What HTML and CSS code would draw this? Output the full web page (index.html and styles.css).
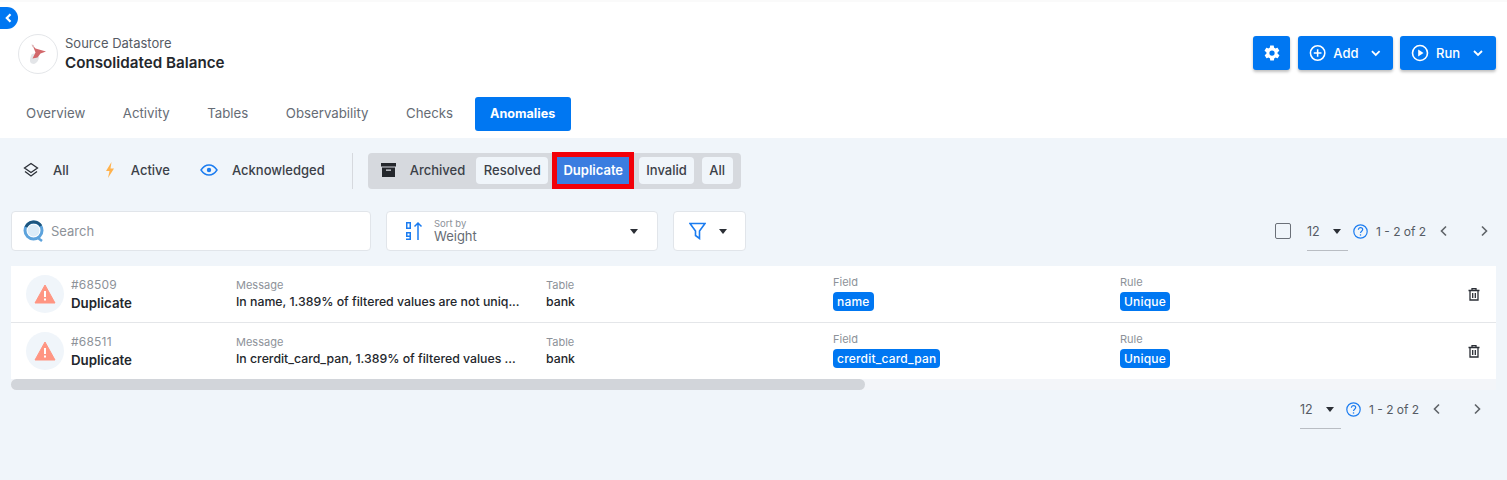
FILE: index.html
```html
<!DOCTYPE html>
<html lang="en">
<head>
<meta charset="utf-8">
<title>Consolidated Balance</title>
<link rel="stylesheet" href="styles.css">
</head>
<body>
<button class="collapse">
  <svg width="10" height="10" viewBox="0 0 10 10"><path d="M6.500 1.200 2.800 5l3.700 3.800" fill="none" stroke="#fff" stroke-width="2.200"/></svg>
</button>

<header class="top">
  <div class="head-row">
    <div class="store">
      <span class="store-logo">
        <svg width="18" height="21" viewBox="0 0 18 21">
          <path d="M3 10c3-1 5-1 6 0l1 4c-1 3-2 5-5 6-2 0-4-1-4-3 0-3 1-6 2-7z" fill="#e3e5e8"/>
          <path d="M3.500 1l3 3.500 10.500 3-5.500 2-3 4-5 1 3-6z" fill="#d2686b"/>
          <path d="M2.500 0.500l2 .5 1 3-2-1z" fill="#dfb8ba"/>
        </svg>
      </span>
      <div>
        <div class="store-type">Source Datastore</div>
        <div class="store-name">Consolidated Balance</div>
      </div>
    </div>
    <div class="actions">
      <button class="act act-icon">
        <svg width="18" height="18" viewBox="0 0 24 24"><path fill="#fff" d="M19.400 13c.1-.3.1-.7.1-1s0-.7-.1-1l2.100-1.600c.2-.2.2-.4.1-.6l-2-3.500c-.1-.2-.4-.3-.6-.2l-2.500 1c-.5-.4-1.100-.7-1.700-1l-.4-2.600c0-.3-.2-.5-.5-.5h-4c-.3 0-.5.2-.5.5l-.4 2.600c-.6.3-1.200.6-1.700 1l-2.500-1c-.2-.1-.5 0-.6.2l-2 3.500c-.1.2-.1.4.1.6L4.600 11c-.1.3-.1.7-.1 1s0 .7.1 1l-2.100 1.600c-.2.2-.2.4-.1.6l2 3.500c.1.2.4.3.6.2l2.500-1c.5.4 1.100.7 1.700 1l.4 2.600c0 .3.2.5.5.5h4c.3 0 .5-.2.5-.5l.4-2.600c.6-.3 1.200-.6 1.700-1l2.500 1c.2.1.5 0 .6-.2l2-3.500c.1-.2.1-.4-.1-.6zM12 15.500a3.500 3.500 0 1 1 0-7 3.500 3.500 0 0 1 0 7z"/></svg>
      </button>
      <button class="act act-add">
        <svg width="18" height="18" viewBox="0 0 18 18" fill="none" stroke="#fff" stroke-width="1.600"><circle cx="9" cy="9" r="7.500"/><path d="M9 5v8M5 9h8"/></svg>
        <span>Add</span>
        <svg class="act-caret" width="12" height="8" viewBox="0 0 12 8"><path d="M2 2l4 4 4-4" fill="none" stroke="#fff" stroke-width="1.800"/></svg>
      </button>
      <button class="act act-run">
        <svg width="18" height="18" viewBox="0 0 18 18" fill="none" stroke="#fff" stroke-width="1.600"><circle cx="9" cy="9" r="7.500"/><path d="M7.200 5.500v7l5.300-3.500z" fill="#fff" stroke="none"/></svg>
        <span>Run</span>
        <svg class="act-caret" width="12" height="8" viewBox="0 0 12 8"><path d="M2 2l4 4 4-4" fill="none" stroke="#fff" stroke-width="1.800"/></svg>
      </button>
    </div>
  </div>
  <nav class="tabs">
    <a class="tab">Overview</a>
    <a class="tab">Activity</a>
    <a class="tab">Tables</a>
    <a class="tab">Observability</a>
    <a class="tab">Checks</a>
    <a class="tab tab-on">Anomalies</a>
  </nav>
</header>

<main class="content">
  <div class="status-row">
    <span class="status status-all">
      <svg width="16" height="16" viewBox="0 0 16 16" fill="none" stroke="#2b2f36" stroke-width="1.300"><path d="M8 1.500 14.500 6 8 10.500 1.500 6z"/><path d="M2 9.500 8 14l6-4.500"/></svg>
      All
    </span>
    <span class="status status-active">
      <svg width="12" height="18" viewBox="0 0 12 18"><path d="M7.500 1 2 10h3.500L4 17l6-9.500H6.500z" fill="#ffb24d"/></svg>
      Active
    </span>
    <span class="status status-ack">
      <svg width="18" height="12" viewBox="0 0 18 12"><path d="M1 6c2-3 5-5 8-5s6 2 8 5c-2 3-5 5-8 5S3 9 1 6z" fill="none" stroke="#1b7cf0" stroke-width="1.400"/><circle cx="9" cy="6" r="2.200" fill="#1b7cf0"/></svg>
      Acknowledged
    </span>
    <span class="divider"></span>
    <div class="archive">
      <span class="archive-label">
        <svg width="15" height="14" viewBox="0 0 15 14"><path d="M0 0h15v3.500H0zM1 4.500h13V14H1z" fill="#24272c"/><path d="M5 6.500h5v1.300H5z" fill="#d6d9de"/></svg>
        Archived
      </span>
      <span class="pill">Resolved</span>
      <span class="pill pill-on">Duplicate</span>
      <span class="pill pill-invalid">Invalid</span>
      <span class="pill pill-all">All</span>
    </div>
  </div>

  <div class="tool-row">
    <label class="search">
      <svg width="24" height="24" viewBox="0 0 24 24" fill="none">
        <circle cx="11.500" cy="11.500" r="8.500" stroke="#5da3dc" stroke-width="3"/>
        <path d="M4 8a8.500 8.500 0 0 1 15-1" stroke="#1d567f" stroke-width="3"/>
        <path d="M16 19l4 3" stroke="#5da3dc" stroke-width="2.500"/>
        <circle cx="11.500" cy="11.500" r="6" fill="#dcecf8"/>
      </svg>
      <span>Search</span>
    </label>
    <div class="sort">
      <svg width="18" height="20" viewBox="0 0 18 20">
        <path d="M1 1h5v7H1zM2.500 2.500v4h2v-4z" fill="#1b7cf0" fill-rule="evenodd"/>
        <path d="M1 11h5v8H1v-1.500h3.500V16H1zM2.500 12.500v2h2v-2z" fill="#1b7cf0" fill-rule="evenodd"/>
        <path d="M13 19V2M9.500 5.500 13 2l3.500 3.500" fill="none" stroke="#1b7cf0" stroke-width="1.500"/>
      </svg>
      <div class="sort-text">
        <div class="sort-label">Sort by</div>
        <div class="sort-value">Weight</div>
      </div>
      <span class="caret"></span>
    </div>
    <div class="filter">
      <svg width="17" height="18" viewBox="0 0 17 18"><path d="M1 1.500h15L10.500 9v7.500l-4-3V9z" fill="none" stroke="#1b7cf0" stroke-width="1.600"/></svg>
      <span class="caret"></span>
    </div>
    <div class="pager pager-top">
      <span class="check"></span>
      <span class="per-page">12<span class="caret"></span></span>
      <svg class="help" width="15" height="15" viewBox="0 0 15 15" fill="none" stroke="#1b7cf0"><circle cx="7.500" cy="7.500" r="6.700" stroke-width="1.200"/><path d="M5.400 5.800c0-3 4.300-2.700 4.300-.2 0 1.600-2.200 1.800-2.200 3.500" stroke-width="1.200"/><path d="M7.500 10.300v1.300" stroke-width="1.300"/></svg>
      <span class="range">1 - 2 of 2</span>
      <svg class="nav" width="10" height="12" viewBox="0 0 10 12"><path d="M7 1.500 2.500 6 7 10.500" fill="none" stroke="#5f6368" stroke-width="1.600"/></svg>
      <svg class="nav" width="10" height="12" viewBox="0 0 10 12"><path d="M3 1.500 7.500 6 3 10.500" fill="none" stroke="#5f6368" stroke-width="1.600"/></svg>
    </div>
  </div>

  <section class="list">
    <div class="row">
      <div class="who">
        <span class="warn"><svg width="22" height="20" viewBox="0 0 22 20"><path d="M11 1 21 19H1z" fill="#ff9582" stroke="#ff9582" stroke-linejoin="round"/><path d="M10 7h2v6h-2zM10 14.500h2v2h-2z" fill="#fff"/></svg></span>
        <div>
          <div class="num">#68509</div>
          <div class="kind">Duplicate</div>
        </div>
      </div>
      <div class="cell">
        <div class="cap">Message</div>
        <div class="val">In name, 1.389% of filtered values are not uniq...</div>
      </div>
      <div class="cell">
        <div class="cap">Table</div>
        <div class="val">bank</div>
      </div>
      <div class="cell cell-tag">
        <div class="cap">Field</div>
        <span class="tag">name</span>
      </div>
      <div class="cell cell-tag">
        <div class="cap">Rule</div>
        <span class="tag">Unique</span>
      </div>
      <svg class="trash" width="12" height="13" viewBox="0 0 12 13" fill="none" stroke="#2b2f36" stroke-width="1.300"><path d="M2 3v9h8V3M0.500 2.500h11M4 2V.700h4V2M4.700 5v5M7.300 5v5"/></svg>
    </div>
    <div class="row">
      <div class="who">
        <span class="warn"><svg width="22" height="20" viewBox="0 0 22 20"><path d="M11 1 21 19H1z" fill="#ff9582" stroke="#ff9582" stroke-linejoin="round"/><path d="M10 7h2v6h-2zM10 14.500h2v2h-2z" fill="#fff"/></svg></span>
        <div>
          <div class="num">#68511</div>
          <div class="kind">Duplicate</div>
        </div>
      </div>
      <div class="cell">
        <div class="cap">Message</div>
        <div class="val">In crerdit_card_pan, 1.389% of filtered values ...</div>
      </div>
      <div class="cell">
        <div class="cap">Table</div>
        <div class="val">bank</div>
      </div>
      <div class="cell cell-tag">
        <div class="cap">Field</div>
        <span class="tag">crerdit_card_pan</span>
      </div>
      <div class="cell cell-tag">
        <div class="cap">Rule</div>
        <span class="tag">Unique</span>
      </div>
      <svg class="trash" width="12" height="13" viewBox="0 0 12 13" fill="none" stroke="#2b2f36" stroke-width="1.300"><path d="M2 3v9h8V3M0.500 2.500h11M4 2V.700h4V2M4.700 5v5M7.300 5v5"/></svg>
    </div>
    <div class="scroll"><span class="thumb"></span></div>
  </section>

  <div class="pager pager-bottom">
    <span class="per-page">12<span class="caret"></span></span>
    <svg class="help" width="15" height="15" viewBox="0 0 15 15" fill="none" stroke="#1b7cf0"><circle cx="7.500" cy="7.500" r="6.700" stroke-width="1.200"/><path d="M5.400 5.800c0-3 4.300-2.700 4.300-.2 0 1.600-2.200 1.800-2.200 3.500" stroke-width="1.200"/><path d="M7.500 10.300v1.300" stroke-width="1.300"/></svg>
    <span class="range">1 - 2 of 2</span>
    <svg class="nav" width="10" height="12" viewBox="0 0 10 12"><path d="M7 1.500 2.500 6 7 10.500" fill="none" stroke="#5f6368" stroke-width="1.600"/></svg>
    <svg class="nav" width="10" height="12" viewBox="0 0 10 12"><path d="M3 1.500 7.500 6 3 10.500" fill="none" stroke="#5f6368" stroke-width="1.600"/></svg>
  </div>
</main>
</body>
</html>
```
FILE: styles.css
```css
* {
    box-sizing: border-box;
}
html, body {
    height: 480px;
    overflow: hidden;
}
body {
    margin: 0;
    background: #f0f5fa;
    font-family: Inter, "Noto Sans", sans-serif;
    font-size: 13px;
    color: #2b2f36;
}
button {
    font-family: inherit;
    border: 0;
    cursor: pointer;
}
.collapse {
    position: absolute;
    left: 0;
    top: 7px;
    width: 18px;
    height: 22px;
    padding: 0;
    display: flex;
    align-items: center;
    justify-content: center;
    background: #0077f2;
    border-radius: 0 11px 11px 0;
}

/* header */
.top {
    height: 138px;
    background: #fff;
    border-top: 2px solid #fafafa;
}
.head-row {
    height: 95px;
    padding: 32px 11px 0 18px;
    display: flex;
    justify-content: space-between;
}
.store {
    display: flex;
    align-items: flex-start;
    gap: 7px;
}
.store-logo {
    width: 40px;
    height: 40px;
    border: 1px solid #e4e6e9;
    border-radius: 50%;
    display: flex;
    align-items: center;
    justify-content: center;
}
.store-type {
    padding-top: 1px;
    font-size: 13px;
    line-height: 16px;
    color: #555b64;
}
.store-name {
    margin-top: 2px;
    font-size: 15.200px;
    line-height: 20px;
    font-weight: 600;
    color: #24272c;
}
.actions {
    display: flex;
    gap: 7px;
    margin-top: 2px;
}
.act {
    height: 34px;
    padding: 0 11px;
    display: flex;
    align-items: center;
    gap: 7px;
    background: #0077f2;
    color: #fff;
    font-size: 13px;
    font-weight: 500;
    border-radius: 3px;
    box-shadow: 0 2px 3px rgba(0, 0, 0, 0.25);
}
.act-icon {
    width: 37px;
    margin-right: 1px;
    padding: 0;
    justify-content: center;
}
.act-add {
    width: 95px;
}
.act-run {
    width: 96px;
}
.act-caret {
    margin-left: 5px;
}
.tabs {
    display: flex;
    gap: 5.500px;
    padding-left: 10px;
}
.tab {
    height: 34px;
    padding: 0 16px;
    line-height: 33px;
    color: #666c75;
    font-size: 13.250px;
    font-weight: 400;
    border-radius: 3px;
}
.tab-on {
    width: 96px;
    padding: 0;
    text-align: center;
    background: #0077f2;
    color: #fff;
    font-size: 12.600px;
    font-weight: 700;
}

/* filters */
.content {
    padding: 0 11px;
}
.status-row {
    height: 73px;
    padding-top: 15px;
    display: flex;
    align-items: flex-start;
}
.status {
    height: 34px;
    display: flex;
    align-items: center;
    font-weight: 500;
    color: #3b4048;
}
.status-all {
    padding-left: 12px;
    gap: 14px;
}
.status-active {
    margin-left: 35px;
    gap: 15px;
}
.status-ack {
    margin-left: 30px;
    gap: 14px;
}
.divider {
    width: 1px;
    height: 36px;
    margin: 0 15px 0 27px;
    background: #d6d9de;
}
.archive {
    width: 373px;
    height: 36px;
    padding: 4px 0 0 13px;
    display: flex;
    gap: 9px;
    background: #d6d9de;
    border-radius: 4px;
}
.archive-label {
    height: 26px;
    display: flex;
    align-items: center;
    gap: 14px;
    margin-right: 2px;
    font-weight: 500;
    color: #3b4048;
}
.pill {
    height: 27px;
    padding: 0 7.500px;
    line-height: 27px;
    background: #f0f5fa;
    border-radius: 4px;
    font-weight: 500;
    color: #3b4048;
}
.pill-on {
    width: 72px;
    padding: 0;
    text-align: center;
    background: #3b7de0;
    color: #fff;
    font-weight: 600;
    border-radius: 0;
    outline: 5.500px solid #f20008;
}
.pill-invalid {
    margin-left: 1px;
    padding: 0 7px;
}
.pill-all {
    margin-left: -1px;
}

/* search, sort */
.tool-row {
    height: 40px;
    display: flex;
    align-items: flex-start;
}
.search, .sort, .filter {
    height: 40px;
    display: flex;
    align-items: center;
    background: #fff;
    border: 1px solid #e1e5ea;
    border-radius: 4px;
}
.search {
    width: 360px;
    padding-left: 10px;
    gap: 5px;
    color: #8d9299;
}
.sort {
    width: 272px;
    margin-left: 15px;
    padding: 0 19px 0 18px;
}
.sort-text {
    margin-left: 11px;
    flex: 1;
    color: #666c75;
}
.sort-label {
    font-size: 9.500px;
    line-height: 10px;
    color: #8d9299;
}
.sort-value {
    font-size: 13px;
    line-height: 15px;
}
.filter {
    width: 73px;
    margin-left: 15px;
    padding-left: 15px;
    gap: 13px;
}
.caret {
    display: inline-block;
    width: 0;
    height: 0;
    border-left: 4.500px solid transparent;
    border-right: 4.500px solid transparent;
    border-top: 5px solid #2b2f36;
}

/* pagination */
.pager {
    display: flex;
    align-items: center;
    color: #555b64;
    font-size: 12px;
}
.pager-top {
    margin-left: auto;
    height: 40px;
    padding-right: 7px;
}
.check {
    width: 16px;
    height: 16px;
    margin-right: 16px;
    border: 1.500px solid #6b7078;
    border-radius: 2px;
}
.per-page {
    width: 41px;
    height: 38px;
    margin-bottom: -2px;
    padding-right: 7px;
    display: flex;
    align-items: center;
    justify-content: space-between;
    font-size: 12.500px;
    border-bottom: 1px solid #b9bdc3;
}
.help {
    margin: 0 8px 0 5px;
}
.range {
    width: 49px;
    white-space: nowrap;
}
.nav {
    margin-left: 14px;
}
.nav + .nav {
    margin-left: 30px;
}

/* anomaly list */
.list {
    margin-top: 15px;
}
.row {
    height: 57px;
    display: grid;
    grid-template-columns: 225px 310px 287px 287px 1fr auto;
    align-items: center;
    padding-right: 16px;
    background: #fff;
    border-bottom: 1px solid #e4e6e9;
}
.row:nth-child(2) {
    height: 56px;
    border-bottom: 0;
}
.who {
    display: flex;
    align-items: center;
    padding-left: 15px;
    gap: 7px;
}
.warn {
    width: 38px;
    height: 38px;
    border-radius: 50%;
    background: #f0f5fa;
    display: flex;
    align-items: center;
    justify-content: center;
}
.num {
    font-size: 12px;
    line-height: 16px;
    letter-spacing: 0.200px;
    color: #8d9299;
}
.kind {
    margin-top: 2px;
    font-size: 13.300px;
    line-height: 16px;
    font-weight: 600;
    color: #24272c;
}
.cap {
    font-size: 11px;
    line-height: 14px;
    color: #8d9299;
}
.val {
    margin-top: 2px;
    font-size: 12.300px;
    line-height: 16px;
    font-weight: 500;
    white-space: nowrap;
    color: #24272c;
}
.cell-tag {
    margin-bottom: 3px;
}
.tag {
    display: inline-block;
    margin-top: 3px;
    padding: 0 4px;
    height: 19px;
    line-height: 19px;
    font-size: 12px;
    letter-spacing: 0.200px;
    font-weight: 500;
    color: #fff;
    background: #0077f2;
    border-radius: 4px;
}
.scroll {
    height: 11px;
    background: #f3f5f9;
}
.thumb {
    display: block;
    width: 854px;
    height: 11px;
    background: #d2d5da;
    border-radius: 6px;
}
.pager-bottom {
    justify-content: flex-end;
    height: 38px;
    padding-right: 14px;
}
```
